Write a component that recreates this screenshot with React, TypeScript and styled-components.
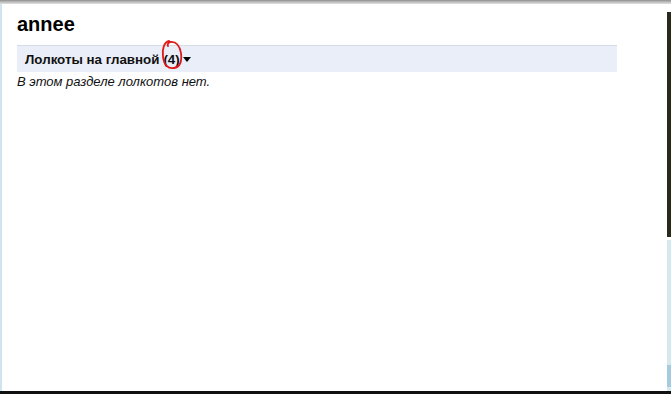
import styled, { createGlobalStyle } from "styled-components";

const Global = createGlobalStyle`
  html, body { margin: 0; padding: 0; background: #fff; }
  body { font-family: "Liberation Sans", Arial, sans-serif; }
`;

const Screen = styled.div`
  width: 671px;
  height: 394px;
  display: flex;
  flex-direction: column;
  overflow: hidden;
  background: #fff;
`;

const TopEdge = styled.div`
  height: 4px;
  background: linear-gradient(#8e8e8e, #b4b4b4 40%, #e2e2e2);
`;

const Middle = styled.div`
  flex: 1;
  display: flex;
`;

const LeftEdge = styled.div`
  width: 2px;
  background: #cfe4ee;
`;

const Content = styled.div`
  flex: 1;
  padding: 9px 50px 0 15px;
`;

const Title = styled.h1`
  margin: 0 0 10px;
  font-size: 20px;
  line-height: 22px;
  font-weight: bold;
  color: #000;
`;

const SectionBar = styled.div`
  position: relative;
  display: flex;
  align-items: center;
  height: 26px;
  padding-left: 8px;
  background: #eaeef8;
  border-top: 1px solid #d6dbe8;
  font-size: 13.33px;
  font-weight: bold;
  color: #111;
`;

const Count = styled.span`
  margin-left: 4px;
`;

const Caret = styled.span`
  margin-left: 3px;
  width: 0;
  height: 0;
  border-left: 4px solid transparent;
  border-right: 4px solid transparent;
  border-top: 5px solid #000;
`;

const Scribble = styled.svg`
  position: absolute;
  left: 143px;
  top: -9px;
  overflow: visible;
`;

const Empty = styled.p`
  margin: 2px 0 0;
  font-size: 13px;
  font-style: italic;
  color: #111;
`;

const RightEdge = styled.div`
  width: 4px;
  display: flex;
  flex-direction: column;
`;

const EdgePart = styled.div<{ $h: number; $c: string }>`
  height: ${(p) => p.$h}px;
  background: ${(p) => p.$c};
`;

const BottomEdge = styled.div`
  height: 3px;
  background: #111;
`;

export default function App() {
  return (
    <Screen>
      <Global />
      <TopEdge />
      <Middle>
        <LeftEdge />
        <Content>
          <Title>annee</Title>
          <SectionBar>
            Лолкоты на главной
            <Count>(4)</Count>
            <Caret />
            <Scribble width="30" height="36" viewBox="0 0 30 36">
              <path
                d="M9 4 C4 5 2 12 3 20 C4 28 8 32 14 31 C20 30 22 24 21 16 C20 9 16 4 10 5 C8 6 7 8 8 9"
                fill="none"
                stroke="#e01818"
                strokeWidth="1.8"
                strokeLinecap="round"
              />
            </Scribble>
          </SectionBar>
          <Empty>В этом разделе лолкотов нет.</Empty>
        </Content>
        <RightEdge>
          <EdgePart $h={8} $c="#fff" />
          <EdgePart $h={225} $c="#2a2a1c" />
          <EdgePart $h={3} $c="#fff" />
          <EdgePart $h={125} $c="#d4e8ee" />
          <EdgePart $h={22} $c="#a6cade" />
          <EdgePart $h={4} $c="#d4e8ee" />
        </RightEdge>
      </Middle>
      <BottomEdge />
    </Screen>
  );
}
